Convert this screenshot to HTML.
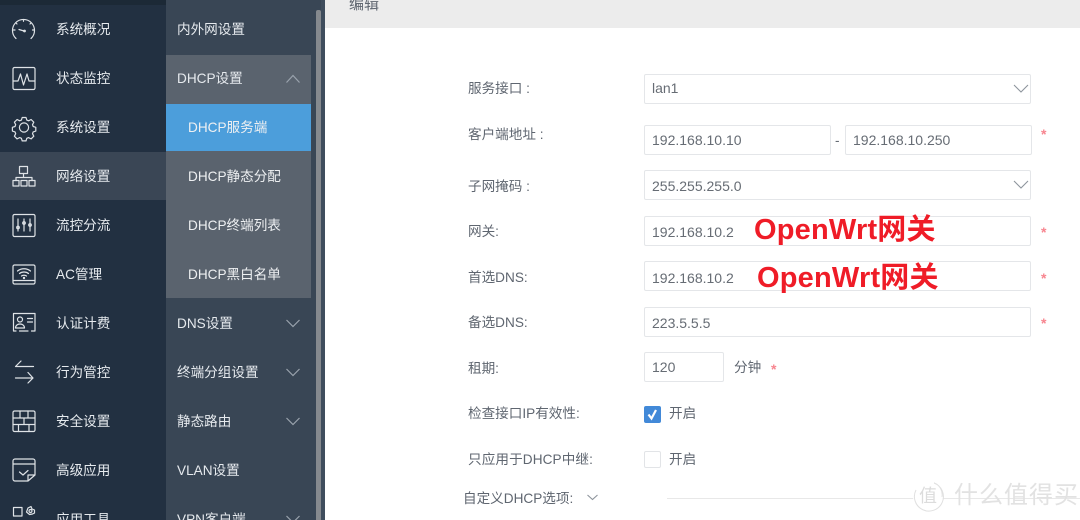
<!DOCTYPE html>
<html lang="zh">
<head>
<meta charset="utf-8">
<title>DHCP</title>
<style>
html,body{margin:0;padding:0;background:#fff}
#p{position:relative;width:1080px;height:520px;overflow:hidden;background:#fff;font-family:"Liberation Sans","Noto Sans CJK SC",sans-serif;font-size:13.6px}
#p div,#p span{position:absolute;white-space:nowrap}
.m{left:56px;color:#e6eaee;line-height:20px;height:20px}
.s{left:177px;color:#e6eaee;line-height:20px;height:20px}
.c{left:188px;color:#eef0f2;line-height:20px;height:20px}
.l{left:468px;color:#5f6670;line-height:20px;height:20px}
.i{box-sizing:border-box;height:30px;border:1px solid #e4e6e9;border-radius:2px;background:#fff;color:#666c74;line-height:29px;padding-left:7px;font-size:14px}
.r{color:#f7858f;font-size:14px;font-weight:bold;line-height:20px;height:20px}
.o{color:#ef1c27;font-weight:bold;font-size:29px;line-height:34px;height:34px;font-family:"Liberation Sans","Noto Sans CJK SC",sans-serif;letter-spacing:.2px}
svg{position:absolute;overflow:visible}
.ic{fill:none;stroke:#dfe3e7;stroke-width:1.2;stroke-linecap:round;stroke-linejoin:round}
</style>
</head>
<body>
<div id="p">
<!-- first sidebar -->
<div style="left:0;top:0;width:166px;height:520px;background:#223041"></div>
<div style="left:0;top:0;width:166px;height:5px;background:#1c2936"></div>
<div style="left:0;top:152px;width:166px;height:48px;background:#3a4655"></div>
<!-- second sidebar -->
<div style="left:166px;top:0;width:159px;height:520px;background:#394655"></div>
<div style="left:166px;top:55px;width:145px;height:243px;background:#5a636e"></div>
<div style="left:166px;top:104px;width:145px;height:47px;background:#4c9edb"></div>
<div style="left:316px;top:10px;width:5px;height:510px;background:#85898e;border-radius:2px 2px 0 0"></div>
<div style="left:321px;top:0;width:4px;height:520px;background:#3f4d5d"></div>
<!-- header -->
<div style="left:325px;top:0;width:755px;height:28px;background:#ececec"></div>
<div style="left:349px;top:-5px;color:#5f6670;line-height:20px;font-size:15px">编辑</div>

<!-- icons -->
<svg class="ic" style="left:0;top:0" width="40" height="520" viewBox="0 0 40 520">
<path d="M16 38.500A11 11 0 1 1 31 38.500"/><path d="M13.500 30h1.500M32.500 30H34M23.500 19.800v1.500M16 23l1 1M31 23l-1 1"/><path d="M19 29.500l5 1.500"/><circle cx="24.500" cy="31" r=".8"/>
<rect x="13" y="67.500" width="22" height="22" rx="1.500"/><path d="M13 81h5l2.500-7 3 11 3.500-11 2 7h6"/>
<path d="M20.500 117.500l.8 2.600 1.800.7 2.500-1.300 2.700 2.700-1.300 2.500.7 1.800 2.600.8v3.800l-2.600.8-.7 1.800 1.300 2.500-2.700 2.700-2.500-1.300-1.800.7-.8 2.600h-3.800l-.8-2.600-1.800-.7-2.500 1.300-2.700-2.700 1.300-2.500-.7-1.800-2.600-.8v-3.800l2.600-.8.7-1.800-1.300-2.500 2.700-2.700 2.500 1.300 1.800-.7.8-2.600z" transform="translate(5.500 0)"/><circle cx="24" cy="127.500" r="4.600"/>
<rect x="19.500" y="166.500" width="8" height="7"/><rect x="13" y="180.500" width="6" height="5.500"/><rect x="21" y="180.500" width="6" height="5.500"/><rect x="29" y="180.500" width="6" height="5.500"/><path d="M23.500 173.500v4M16 180.500v-3h16v3"/>
<rect x="13" y="214.500" width="22" height="22" rx="1.500"/><path d="M18 219v12M24 219v12M30 219v12"/><circle cx="18" cy="227.500" r="1.300"/><circle cx="24" cy="223" r="1.300"/><circle cx="30" cy="225" r="1.300"/>
<rect x="13" y="265" width="22" height="19" rx="1.500"/><path d="M13 280.500h22M17.500 271c3.700-3 9.300-3 13 0M19.500 273.500c2.500-2 6.500-2 9 0M21.500 276c1.300-1 3.700-1 5 0"/><circle cx="24" cy="278" r=".6"/>
<path d="M13.500 331v-17.500h21.500V331M13.500 331h2.500M19.500 331h8.500M31.500 331h3.500"/><circle cx="20" cy="319.500" r="2.500"/><path d="M15.500 328c0-2.500 2-4 4.500-4s4.500 1.500 4.500 4zM27.500 318.500h5M27.500 322h5"/>
<path d="M33.500 366.500H15.500l5.500-5.500M15.500 378H33l-5-5.500M33 378l-5 5"/>
<rect x="13" y="411" width="22" height="20.500" rx="1.500"/><path d="M13 418h22M13 424.500h22M20 411v7M28 411v7M24 418v6.500M18.500 424.500v7M29 424.500v7"/>
<path d="M28 481H15a2 2 0 0 1-2-2V461a2 2 0 0 1 2-2h18a2 2 0 0 1 2 2v14l-7 6v-6h7M13 464h22M19.500 472l3.500 3 5-4.500"/>
<rect x="13.500" y="507.500" width="8.500" height="8.500"/><path d="M28 508l3-1.500 1 2.500 2.500 1v3l-2 1-3 .5-3-2.500z"/><circle cx="30.500" cy="511" r="1.500"/>
</svg>

<!-- main menu -->
<div class="m" style="top:20px">系统概况</div>
<div class="m" style="top:69px">状态监控</div>
<div class="m" style="top:118px">系统设置</div>
<div class="m" style="top:167px">网络设置</div>
<div class="m" style="top:215.500px">流控分流</div>
<div class="m" style="top:264.500px">AC管理</div>
<div class="m" style="top:313.500px">认证计费</div>
<div class="m" style="top:362.500px">行为管控</div>
<div class="m" style="top:411.500px">安全设置</div>
<div class="m" style="top:460.500px">高级应用</div>
<div class="m" style="top:509.500px">应用工具</div>

<!-- sub menu -->
<div class="s" style="top:20px">内外网设置</div>
<div class="s" style="top:69px">DHCP设置</div>
<div class="c" style="top:118px">DHCP服务端</div>
<div class="c" style="top:167px">DHCP静态分配</div>
<div class="c" style="top:215.500px">DHCP终端列表</div>
<div class="c" style="top:264.500px">DHCP黑白名单</div>
<div class="s" style="top:313.500px">DNS设置</div>
<div class="s" style="top:362.500px">终端分组设置</div>
<div class="s" style="top:411.500px">静态路由</div>
<div class="s" style="top:460.500px">VLAN设置</div>
<div class="s" style="top:509.500px">VPN客户端</div>
<svg style="left:284px;top:0" width="20" height="520" viewBox="0 0 20 520" fill="none" stroke="#9aa3ad" stroke-width="1.200">
<path d="M2.500 82.500L9 75.500l6.500 7"/>
<path d="M2.500 320l6.500 6.500 6.500-6.500M2.500 369l6.500 6.500 6.500-6.500M2.500 418l6.500 6.500 6.500-6.500M2.500 516l6.500 6.500 6.500-6.500"/>
</svg>

<!-- form -->
<div class="l" style="top:79px">服务接口&nbsp;:</div>
<div class="l" style="top:125px">客户端地址&nbsp;:</div>
<div class="l" style="top:177px">子网掩码&nbsp;:</div>
<div class="l" style="top:222px">网关:</div>
<div class="l" style="top:268px">首选DNS:</div>
<div class="l" style="top:313px">备选DNS:</div>
<div class="l" style="top:359px">租期:</div>
<div class="l" style="top:404px">检查接口IP有效性:</div>
<div class="l" style="top:450px;letter-spacing:.1px">只应用于DHCP中继:</div>
<div class="l" style="top:489px;left:463px">自定义DHCP选项:</div>

<div class="i" style="left:644px;top:74px;width:387px;line-height:27px">lan1</div>
<div class="i" style="left:644px;top:125px;width:187px">192.168.10.10</div>
<div style="left:835px;top:131px;color:#666c74;line-height:20px">-</div>
<div class="i" style="left:845px;top:125px;width:187px">192.168.10.250</div>
<div class="i" style="left:644px;top:170px;width:387px;line-height:31px">255.255.255.0</div>
<div class="i" style="left:644px;top:216px;width:387px;line-height:31px">192.168.10.2</div>
<div class="i" style="left:644px;top:261px;width:387px;line-height:33px">192.168.10.2</div>
<div class="i" style="left:644px;top:307px;width:387px;line-height:31px">223.5.5.5</div>
<div class="i" style="left:644px;top:352px;width:80px">120</div>
<div style="left:734px;top:358px;color:#5f6670;line-height:20px">分钟</div>

<svg style="left:1010px;top:0" width="22" height="200" fill="none" stroke="#8d949c" stroke-width="1.100">
<path d="M4 85l7 7 7-7M4 181l7 7 7-7"/>
</svg>
<svg style="left:586px;top:490px" width="14" height="14" fill="none" stroke="#8d949c" stroke-width="1.100">
<path d="M1.500 5l5 4.500 5-4.500"/>
</svg>

<div class="r" style="left:1041px;top:124px">*</div>
<div class="r" style="left:1041px;top:222px">*</div>
<div class="r" style="left:1041px;top:268px">*</div>
<div class="r" style="left:1041px;top:313px">*</div>
<div class="r" style="left:771px;top:359px">*</div>

<div style="left:644px;top:406px;width:17px;height:17px;background:#4289d8;border-radius:2px"></div>
<svg style="left:644px;top:406px" width="17" height="17" fill="none" stroke="#fff" stroke-width="2.200"><path d="M4.500 8.500l3 4L12 4"/></svg>
<div style="left:669px;top:404px;color:#5f6670;line-height:20px">开启</div>
<div style="box-sizing:border-box;left:644px;top:451px;width:17px;height:17px;border:1px solid #e2e4e7;border-radius:2px;background:#fff"></div>
<div style="left:669px;top:450px;color:#5f6670;line-height:20px">开启</div>
<div style="left:667px;top:498px;width:413px;height:1px;background:#e8e8e8"></div>

<div class="o" style="left:754px;top:213px">OpenWrt网关</div>
<div class="o" style="left:757px;top:261px">OpenWrt网关</div>

<!-- watermark -->
<div style="left:913px;top:481px;width:30px;height:30px;border-radius:50%;background:#fff"></div>
<svg style="left:912px;top:480px" width="34" height="34" fill="none" stroke="#e0e0e0" stroke-width="1"><path d="M22 3A14.500 14.500 0 1 1 4 10M22 3c6 2 9 8 8 14"/></svg>
<div style="left:919px;top:484px;color:#dcdcdc;font-size:18px;line-height:24px">值</div>
<div style="left:954px;top:481px;color:#e2e2e2;font-size:24px;line-height:30px;letter-spacing:1px">什么值得买</div>
</div>
</body>
</html>
